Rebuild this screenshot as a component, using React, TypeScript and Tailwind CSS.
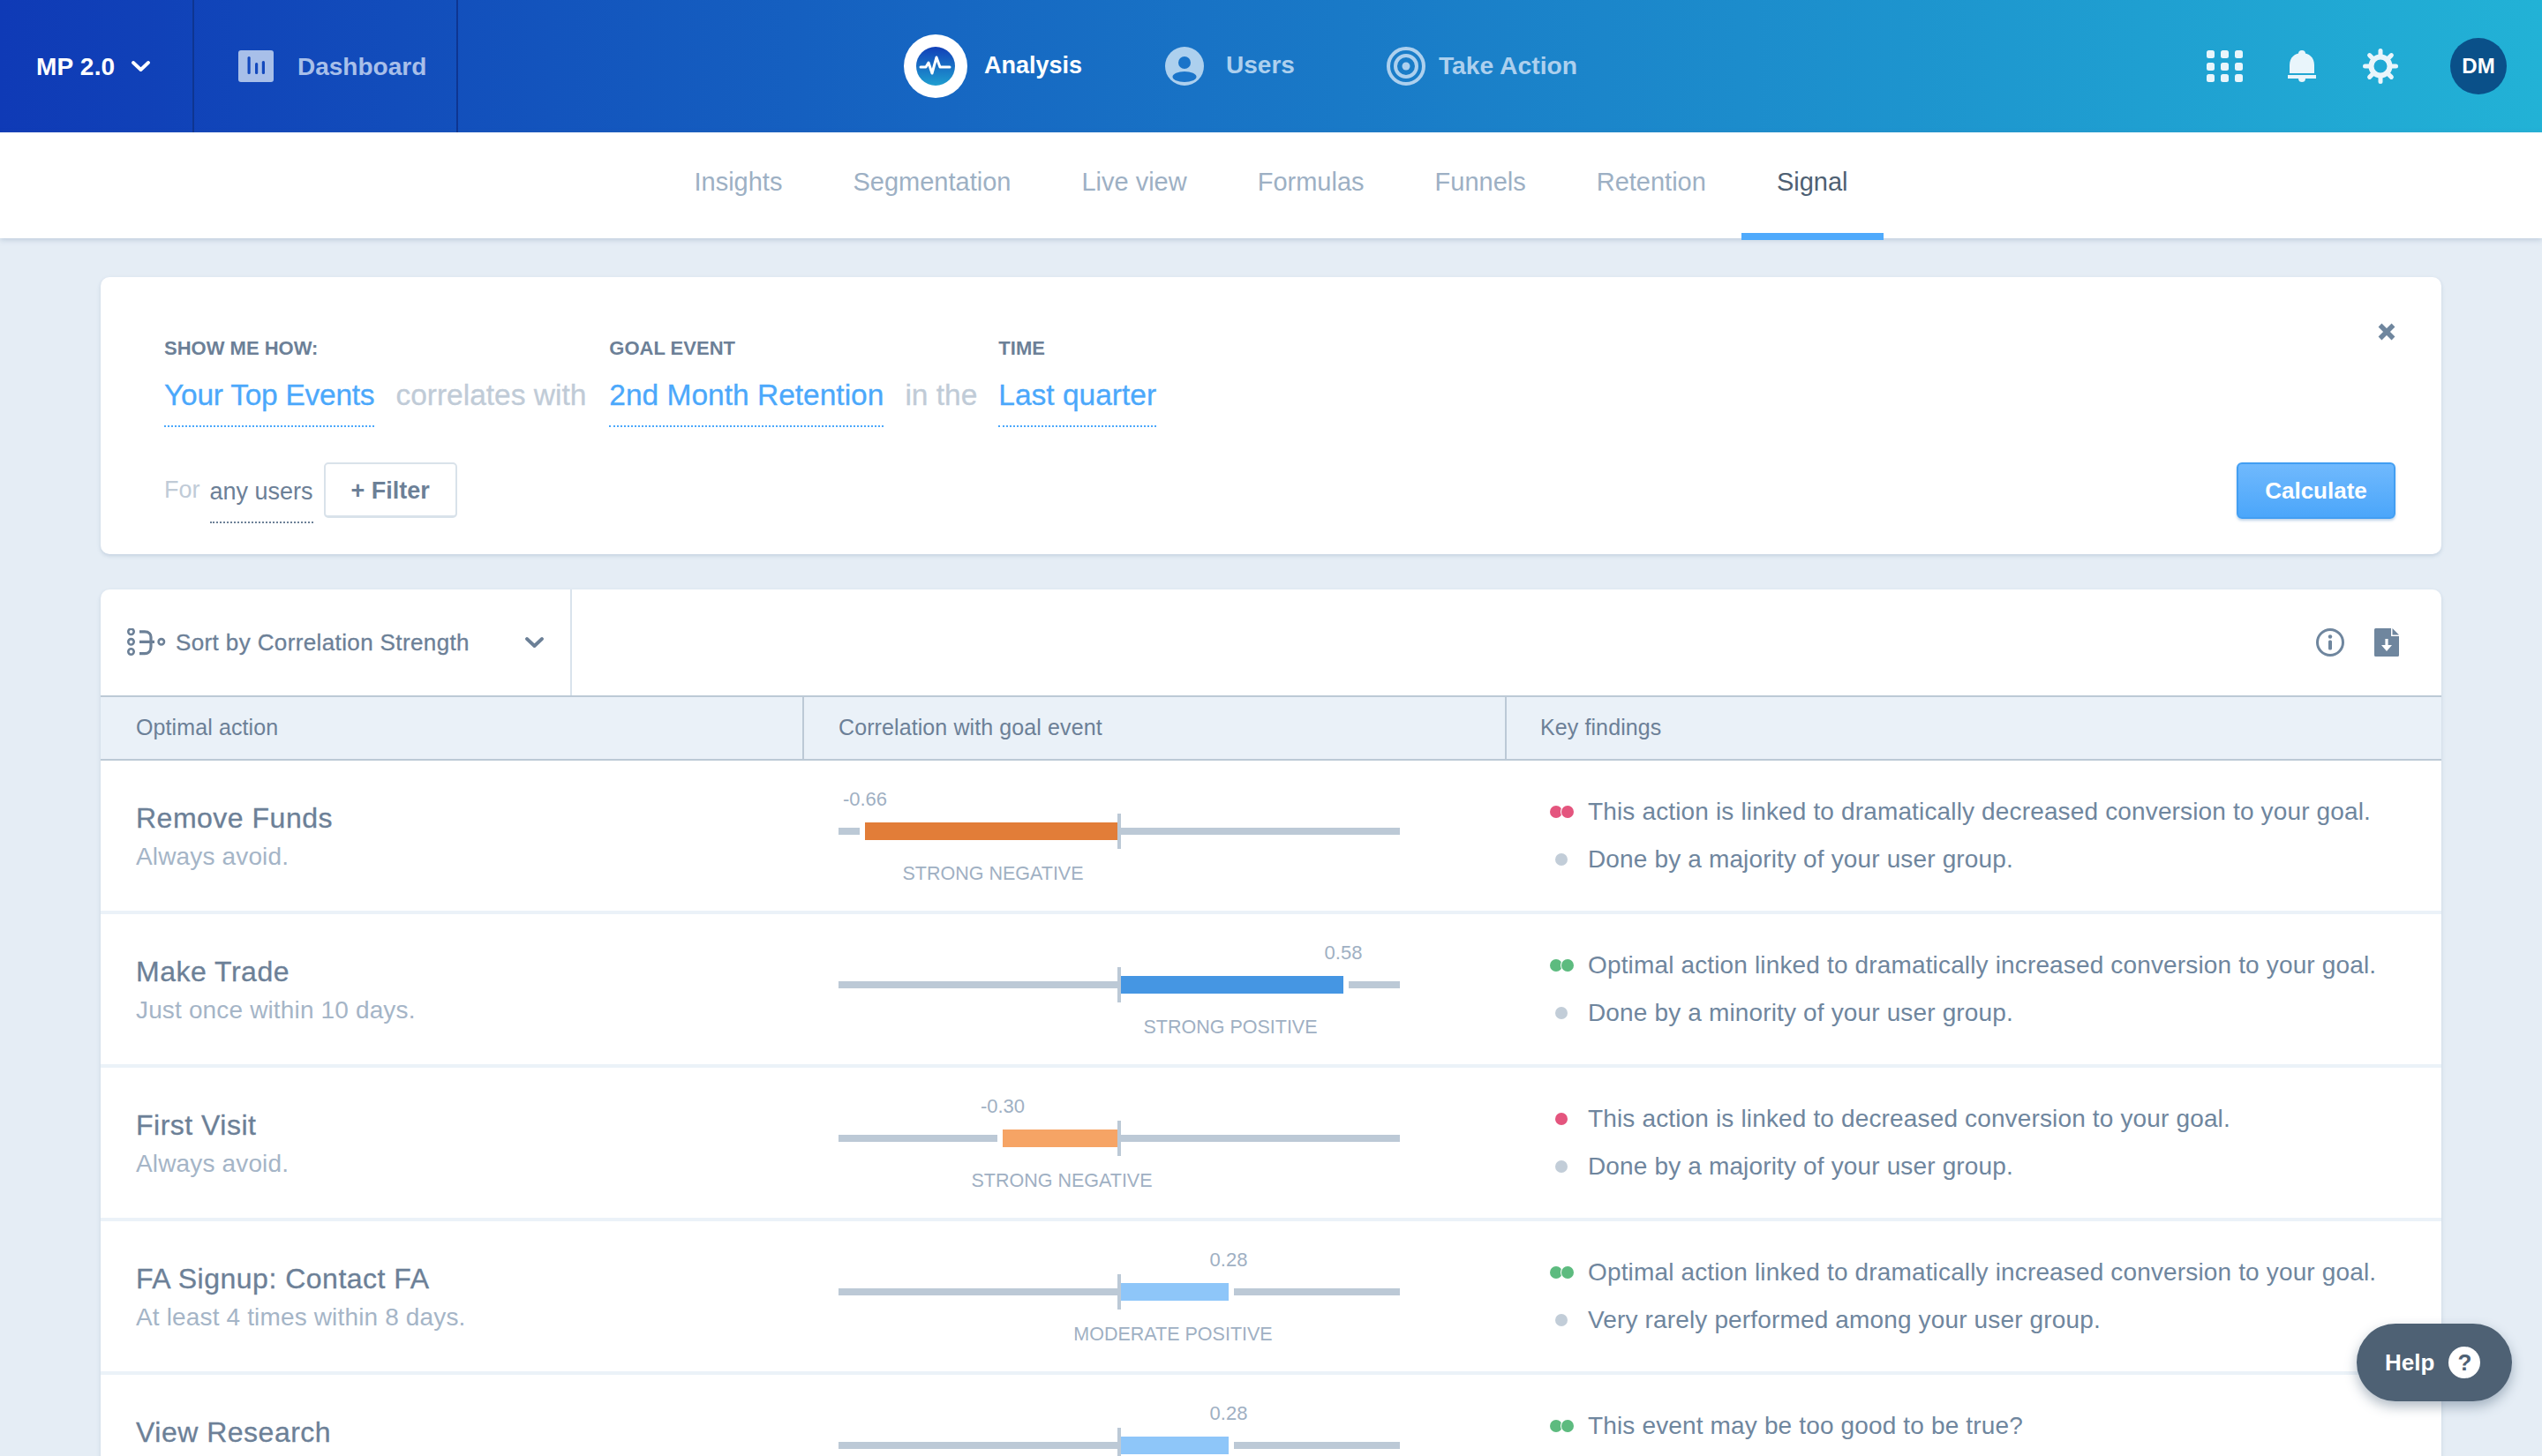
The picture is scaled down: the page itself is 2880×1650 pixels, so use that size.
import React from "react";

const FONT = "font-['Liberation_Sans',Arial,sans-serif]";

function Pulse() {
  return (
    <svg width="44" height="44" viewBox="0 0 44 44" className="rounded-full bg-[linear-gradient(180deg,#113fb8,#1f9fd0)]">
      <path d="M5 23 H11 L14 18 L18 30 L23 12 L27 23 H38" fill="none" stroke="#fff" strokeWidth="3" strokeLinejoin="round" strokeLinecap="round" />
    </svg>
  );
}

function UsersIcon() {
  return (
    <svg width="44" height="44" viewBox="0 0 44 44">
      <circle cx="22" cy="22" r="22" fill="#add0ee" />
      <circle cx="22" cy="18" r="7" fill="#1a74c9" />
      <ellipse cx="22" cy="34" rx="13.5" ry="6" fill="#1a74c9" />
    </svg>
  );
}

function TargetIcon() {
  return (
    <svg width="44" height="44" viewBox="0 0 44 44" fill="none" stroke="#add0ee">
      <circle cx="22" cy="22" r="20" strokeWidth="4" />
      <circle cx="22" cy="22" r="12" strokeWidth="4" />
      <circle cx="22" cy="22" r="4.5" fill="#add0ee" stroke="none" />
    </svg>
  );
}

function DashIcon() {
  return (
    <svg width="40" height="36" viewBox="0 0 40 36">
      <rect width="40" height="36" rx="3" fill="#a8bfe9" />
      <rect x="10.5" y="7" width="3.2" height="20" rx="1.5" fill="#1449bd" />
      <rect x="19" y="14" width="3.2" height="13" rx="1.5" fill="#1449bd" />
      <rect x="26.8" y="12" width="3.2" height="15" rx="1.5" fill="#1449bd" />
    </svg>
  );
}

function Chevron({ color, w = 21, h = 12 }: { color: string; w?: number; h?: number }) {
  return (
    <svg width={w} height={h} viewBox="0 0 21 12" fill="none">
      <path d="M2 2 L10.5 10 L19 2" stroke={color} strokeWidth="3.8" strokeLinecap="round" strokeLinejoin="round" />
    </svg>
  );
}

function GridIcon() {
  const cells = [0, 1, 2, 3, 4, 5, 6, 7, 8];
  return (
    <div className="grid w-[42px] grid-cols-3 gap-x-[6.5px] gap-y-[4.5px]">
      {cells.map((c) => (
        <div key={c} className="h-[9px] w-[9px] rounded-[2.5px] bg-[#e9f5fb]" />
      ))}
    </div>
  );
}

function Bell() {
  return (
    <svg width="32" height="36" viewBox="0 0 32 36" fill="#e9f5fb">
      <circle cx="16" cy="4" r="4" />
      <path d="M2 26 V17 C2 8 8 3 16 3 C24 3 30 8 30 17 V26 Z" />
      <rect x="0" y="28" width="32" height="4" />
      <path d="M12 32 H20 C20 35 18 36 16 36 C14 36 12 35 12 32 Z" />
    </svg>
  );
}

function Gear() {
  const spokes = [0, 45, 90, 135, 180, 225, 270, 315];
  return (
    <svg width="40" height="40" viewBox="0 0 40 40">
      {spokes.map((a) => (
        <line key={a} x1="20" y1="20" x2="20" y2="2.5" stroke="#e9f5fb" strokeWidth="5" strokeLinecap="round" transform={`rotate(${a} 20 20)`} />
      ))}
      <circle cx="20" cy="20" r="10.5" fill="#1fa9d5" stroke="#e9f5fb" strokeWidth="6" />
    </svg>
  );
}

function SortIcon() {
  return (
    <svg width="44" height="32" viewBox="0 0 44 32" fill="none" stroke="#6c8097" strokeWidth="2.6">
      <circle cx="4.5" cy="3.8" r="3.2" />
      <circle cx="4.5" cy="15.3" r="3.2" />
      <circle cx="4.5" cy="26.5" r="3.2" />
      <circle cx="38.8" cy="15.3" r="3.2" />
      <path d="M14 3.8 H20 C25 3.8 27 7 27 10 V21 C27 25 25 28.6 20 28.6 H14 M14 15.3 H31" strokeWidth="3.2" />
    </svg>
  );
}

function Info() {
  return (
    <svg width="32" height="32" viewBox="0 0 32 32">
      <circle cx="16" cy="16" r="14.5" fill="none" stroke="#6f869e" strokeWidth="3" />
      <circle cx="16" cy="9.5" r="2.2" fill="#6f869e" />
      <rect x="14" y="13.5" width="4" height="11" rx="1.5" fill="#6f869e" />
    </svg>
  );
}

function DocDown() {
  return (
    <svg width="28" height="32" viewBox="0 0 28 32">
      <path d="M1.5 0 H19 V9 H28 V30.5 A1.5 1.5 0 0 1 26.5 32 H1.5 A1.5 1.5 0 0 1 0 30.5 V1.5 A1.5 1.5 0 0 1 1.5 0 Z" fill="#6f869e" />
      <path d="M20.5 0 L28 7.5 H20.5 Z" fill="#6f869e" />
      <path d="M12.4 12 H15.6 V19 H20 L14 26 L8 19 H12.4 Z" fill="#fff" />
    </svg>
  );
}

function Close() {
  return (
    <svg width="20" height="20" viewBox="0 0 20 20">
      <path d="M2.5 2.5 L17.5 17.5 M17.5 2.5 L2.5 17.5" stroke="#6f869e" strokeWidth="5.5" />
    </svg>
  );
}

function Field({ label, value, tight }: { label: string; value: string; tight?: boolean }) {
  return (
    <div className="flex flex-col">
      <div className="mb-[20px] h-[26px] text-[22px] font-bold leading-[26px] text-[#6c8097]">{label}</div>
      <div
        className={`h-[56px] border-b-2 border-dotted border-[#4ba8fb] text-[33.5px] leading-[40px] text-[#4ba8fb] [-webkit-text-stroke:0.3px_currentColor] ${
          tight ? "tracking-[-0.25px]" : ""
        }`}
      >
        {value}
      </div>
    </div>
  );
}

type Row = {
  title: string;
  sub: string;
  value: string;
  label: string;
  neg: boolean;
  w: number;
  color: string;
  findings: { text: string; dots: number; color: string }[];
};

const GREY = "bg-[#c2cdd8]";
const RED = "bg-[#e4557e]";
const GREEN = "bg-[#5dbb7f]";

const ROWS: Row[] = [
  {
    title: "Remove Funds",
    sub: "Always avoid.",
    value: "-0.66",
    label: "STRONG NEGATIVE",
    neg: true,
    w: 286,
    color: "#e27d38",
    findings: [
      { text: "This action is linked to dramatically decreased conversion to your goal.", dots: 2, color: RED },
      { text: "Done by a majority of your user group.", dots: 1, color: GREY },
    ],
  },
  {
    title: "Make Trade",
    sub: "Just once within 10 days.",
    value: "0.58",
    label: "STRONG POSITIVE",
    neg: false,
    w: 252,
    color: "#4596e3",
    findings: [
      { text: "Optimal action linked to dramatically increased conversion to your goal.", dots: 2, color: GREEN },
      { text: "Done by a minority of your user group.", dots: 1, color: GREY },
    ],
  },
  {
    title: "First Visit",
    sub: "Always avoid.",
    value: "-0.30",
    label: "STRONG NEGATIVE",
    neg: true,
    w: 130,
    color: "#f6a465",
    findings: [
      { text: "This action is linked to decreased conversion to your goal.", dots: 1, color: RED },
      { text: "Done by a majority of your user group.", dots: 1, color: GREY },
    ],
  },
  {
    title: "FA Signup: Contact FA",
    sub: "At least 4 times within 8 days.",
    value: "0.28",
    label: "MODERATE POSITIVE",
    neg: false,
    w: 122,
    color: "#8ec6f9",
    findings: [
      { text: "Optimal action linked to dramatically increased conversion to your goal.", dots: 2, color: GREEN },
      { text: "Very rarely performed among your user group.", dots: 1, color: GREY },
    ],
  },
  {
    title: "View Research",
    sub: "",
    value: "0.28",
    label: "",
    neg: false,
    w: 122,
    color: "#8ec6f9",
    findings: [{ text: "This event may be too good to be true?", dots: 2, color: GREEN }],
  },
];

function Chart({ r }: { r: Row }) {
  const barLeft = r.neg ? 316 - r.w : 320;
  const far = r.neg ? barLeft : 320 + r.w;
  const leftEnd = r.neg ? barLeft - 6 : 316;
  const rightStart = r.neg ? 320 : far + 6;
  return (
    <div className="relative h-[170px] w-[636px]">
      <div className="absolute top-[31px] -translate-x-1/2 text-[22px] leading-[26px] text-[#9fb0c3]" style={{ left: far }}>
        {r.value}
      </div>
      <div className="absolute top-[76px] h-[8px] bg-[#bcc9d6]" style={{ left: 0, width: leftEnd }} />
      <div className="absolute top-[76px] h-[8px] bg-[#bcc9d6]" style={{ left: rightStart, width: 636 - rightStart }} />
      <div className="absolute top-[70px] h-[20px]" style={{ left: barLeft, width: r.w, backgroundColor: r.color }} />
      <div className="absolute left-[316px] top-[60px] h-[40px] w-[4px] bg-[#bcc9d6]" />
      {r.label && (
        <div
          className="absolute top-[115px] -translate-x-1/2 whitespace-nowrap text-[21.5px] leading-[26px] text-[#9fb0c3]"
          style={{ left: barLeft + r.w / 2 + (r.neg ? 2 : -2) }}
        >
          {r.label}
        </div>
      )}
    </div>
  );
}

function Dots({ n, color }: { n: number; color: string }) {
  return (
    <div className="flex w-[28px] shrink-0 justify-center">
      <div className={`h-[14px] w-[14px] rounded-full ${color}`} />
      {n === 2 && <div className={`-ml-[1px] h-[14px] w-[14px] rounded-full ${color} ring-[1px] ring-white`} />}
    </div>
  );
}

function TableRow({ r }: { r: Row }) {
  return (
    <div className="grid h-[174px] shrink-0 grid-cols-[797px_796px_1fr] border-b-4 border-[#ebf2f8]">
      <div className="pl-10 pt-[45px]">
        <div className="text-[32px] leading-[40px] tracking-[0.5px] text-[#6c8097] [-webkit-text-stroke:0.3px_currentColor]">{r.title}</div>
        <div className="mt-[6px] text-[28px] leading-[36px] tracking-[0.15px] text-[#a5b5c7]">{r.sub}</div>
      </div>
      <div className="pl-[39px]">
        <Chart r={r} />
      </div>
      <div className="pl-[48px] pt-[31px]">
        {r.findings.map((f) => (
          <div key={f.text} className="flex h-[54px] items-center gap-[16px] text-[28px] tracking-[0.15px] text-[#6f869e]">
            <Dots n={f.dots} color={f.color} />
            <span className="whitespace-nowrap">{f.text}</span>
          </div>
        ))}
      </div>
    </div>
  );
}

const TABS = ["Insights", "Segmentation", "Live view", "Formulas", "Funnels", "Retention", "Signal"];

export default function App() {
  return (
    <div className={`relative h-[1650px] w-[2880px] overflow-hidden bg-[#e5edf5] ${FONT}`}>
      <header className="flex h-[150px] items-stretch bg-[linear-gradient(90deg,#0f3ab6,#22b2d6)]">
        <div className="flex w-[220px] items-center gap-[19px] border-r-2 border-[#0e3591] pl-[41px]">
          <span className="pt-[2px] text-[28px] font-bold tracking-[0.2px] text-white">MP 2.0</span>
          <Chevron color="#fff" />
        </div>
        <div className="flex w-[299px] items-center gap-[27px] border-r-2 border-[#0e3591] pl-[50px]">
          <DashIcon />
          <span className="pt-[2px] text-[28px] font-bold text-[#a8bfe9]">Dashboard</span>
        </div>
        <nav className="ml-[505px] flex items-center">
          <div className="flex h-[72px] w-[72px] items-center justify-center rounded-full bg-white">
            <Pulse />
          </div>
          <span className="ml-[19px] pb-[2px] text-[27px] font-bold text-white">Analysis</span>
          <div className="ml-[94px]">
            <UsersIcon />
          </div>
          <span className="ml-[25px] pb-[2px] text-[28px] font-bold text-[#add0ee]">Users</span>
          <div className="ml-[104px]">
            <TargetIcon />
          </div>
          <span className="ml-[15px] pb-[2px] text-[28.3px] font-bold text-[#add0ee]">Take Action</span>
        </nav>
        <div className="ml-auto flex items-center pr-[40px]">
          <GridIcon />
          <div className="ml-[50px]">
            <Bell />
          </div>
          <div className="ml-[53px]">
            <Gear />
          </div>
          <div className="ml-[59px] flex h-[64px] w-[64px] items-center justify-center rounded-full bg-[#0a5089] text-[24px] font-bold text-white">
            DM
          </div>
        </div>
      </header>

      <div className="relative flex h-[120px] justify-center bg-white shadow-[0_2px_6px_rgba(120,145,175,0.35)]">
        {TABS.map((t) => (
          <div key={t} className={`relative flex items-center px-10 pb-[7px] text-[29px] ${t === "Signal" ? "text-[#4e6073]" : "text-[#9db0c4]"}`}>
            {t}
            {t === "Signal" && <div className="absolute inset-x-0 -bottom-[2px] h-[8px] bg-[#4faafc]" />}
          </div>
        ))}
      </div>

      <main className="px-[114px] pt-[44px]">
        <section className="relative h-[314px] rounded-[10px] bg-white px-[72px] pt-[68px] shadow-[0_2px_4px_rgba(120,145,175,0.3)]">
          <div className="absolute right-[52px] top-[52px]">
            <Close />
          </div>
          <div className="flex gap-6">
            <Field label="SHOW ME HOW:" value="Your Top Events" tight />
            <div className="pt-[46px] text-[33.5px] leading-[40px] text-[#c0cbd7] [-webkit-text-stroke:0.3px_currentColor]">correlates with</div>
            <div className="ml-[2px]">
              <Field label="GOAL EVENT" value="2nd Month Retention" />
            </div>
            <div className="pt-[46px] text-[33.5px] leading-[40px] text-[#c0cbd7] [-webkit-text-stroke:0.3px_currentColor]">in the</div>
            <Field label="TIME" value="Last quarter" />
          </div>
          <div className="mt-[40px] flex h-[63px] items-center">
            <span className="text-[27px] text-[#c0cbd7]">For</span>
            <span className="ml-[11px] h-[69px] self-start border-b-2 border-dotted border-[#6c8097] pt-[14px] text-[27px] leading-[38px] text-[#6c8097]">any users</span>
            <button className="ml-[12px] h-[63px] w-[151px] rounded-[5px] border-2 border-b-[3px] border-[#d9e2ea] pt-[2px] text-[27px] font-bold text-[#6c8097]">
              + Filter
            </button>
            <button className="-mr-[20px] ml-auto h-[64px] w-[180px] rounded-[6px] border-2 border-[#429ef2] bg-[linear-gradient(180deg,#70b9fd,#4ba6fa)] pt-[2px] text-[26px] font-bold text-white shadow-[0_2px_3px_rgba(70,130,190,0.35)]">
              Calculate
            </button>
          </div>
        </section>

        <section className="mt-[40px] flex h-[1100px] flex-col rounded-t-[10px] bg-white shadow-[0_2px_4px_rgba(120,145,175,0.3)]">
          <div className="flex h-[122px] shrink-0 items-stretch border-b-2 border-[#bcc9d6]">
            <div className="flex w-[534px] items-center border-r-2 border-[#d9e3ec] pl-[30px]">
              <SortIcon />
              <span className="ml-[11px] text-[26px] tracking-[0.38px] text-[#6c8097] [-webkit-text-stroke:0.3px_currentColor]">Sort by Correlation Strength</span>
              <div className="ml-[63px]">
                <Chevron color="#6c8097" />
              </div>
            </div>
            <div className="ml-auto flex items-center gap-[34px] pr-[48px]">
              <Info />
              <DocDown />
            </div>
          </div>
          <div className="grid h-[72px] shrink-0 grid-cols-[797px_796px_1fr] border-b-2 border-[#bcc9d6] bg-[#eaf1f8] text-[25px] tracking-[0.1px] text-[#6c8097]">
            <div className="flex items-center border-r-2 border-[#bcc9d6] pl-10">Optimal action</div>
            <div className="flex items-center border-r-2 border-[#bcc9d6] pl-[39px]">Correlation with goal event</div>
            <div className="flex items-center pl-[38px]">Key findings</div>
          </div>
          {ROWS.map((r) => (
            <TableRow key={r.title} r={r} />
          ))}
        </section>
      </main>

      <div className="absolute left-[2670px] top-[1500px] flex h-[88px] w-[176px] items-center gap-4 rounded-full bg-[#4e6174] pl-[32px] shadow-[0_6px_14px_rgba(60,85,110,0.4)]">
        <span className="text-[26px] font-bold text-white">Help</span>
        <span className="flex h-[36px] w-[36px] items-center justify-center rounded-full bg-white text-[26px] font-bold leading-none text-[#4e6174]">?</span>
      </div>
    </div>
  );
}
